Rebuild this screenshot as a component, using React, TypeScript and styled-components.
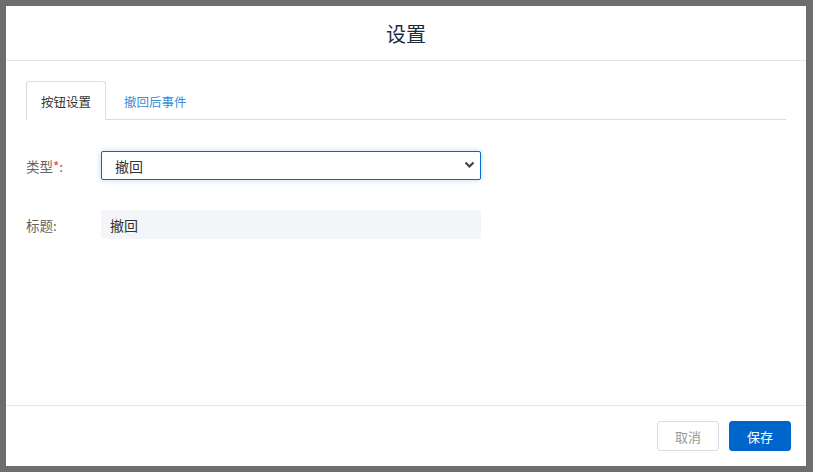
import React, { FC, useState } from 'react';
import styled, { createGlobalStyle } from 'styled-components';

const GlobalStyle = createGlobalStyle`
  html, body {
    margin: 0;
    padding: 0;
    background: #6d6d6d;
    font-family: "Noto Sans CJK SC", "Noto Sans", sans-serif;
  }
`;

const Backdrop = styled.div`
  width: 813px;
  height: 472px;
  box-sizing: border-box;
  padding: 6px;
  background: #6d6d6d;
`;

const Dialog = styled.div`
  width: 800px;
  height: 460px;
  background: #fff;
  display: flex;
  flex-direction: column;
`;

const Header = styled.div`
  height: 54px;
  flex: none;
  display: flex;
  align-items: center;
  justify-content: center;
  border-bottom: 1px solid #e4e4f0;

  > h2 {
    margin: 0;
    font-size: 20px;
    font-weight: 400;
    color: #1c2b3f;
  }
`;

const Body = styled.div`
  flex: 1;
  padding: 20px 20px 0;
`;

const TabBar = styled.div`
  display: flex;
  height: 38px;
  border-bottom: 1px solid #dcdde2;
`;

const Tab = styled.div<{ $active?: boolean }>`
  box-sizing: border-box;
  height: 39px;
  padding: 0 14px;
  display: flex;
  align-items: center;
  font-size: 12.5px;
  cursor: pointer;
  color: ${ p => p.$active ? '#333' : '#3a8bd8' };
  background: ${ p => p.$active ? '#fff' : 'transparent' };
  border: 1px solid ${ p => p.$active ? '#dcdde2' : 'transparent' };
  border-bottom: none;
  border-radius: 3px 3px 0 0;
  margin-right: 3px;
`;

const Form = styled.div`
  display: flex;
  flex-direction: column;
  gap: 30px;
  padding-top: 31px;
`;

const Row = styled.div`
  display: flex;
  align-items: center;
`;

const Label = styled.label`
  width: 75px;
  font-size: 13.5px;
  color: #666;

  > em {
    font-style: normal;
    color: #e33;
  }
`;

const SelectWrap = styled.div`
  position: relative;
  width: 380px;
  height: 29px;

  > svg {
    position: absolute;
    right: 6px;
    top: 10px;
    pointer-events: none;
  }
`;

const Select = styled.select`
  appearance: none;
  width: 100%;
  height: 100%;
  box-sizing: border-box;
  border: 1px solid #0a66c8;
  border-radius: 2px;
  box-shadow: 0 0 6px rgba(10, 102, 200, 0.25);
  padding: 0 13px;
  font-family: inherit;
  font-size: 14px;
  color: #333;
  background: #fff;
  outline: none;
`;

const Input = styled.input`
  width: 380px;
  height: 29px;
  box-sizing: border-box;
  border: none;
  border-radius: 2px;
  background: #f4f5f9;
  padding: 0 9px;
  font-family: inherit;
  font-size: 14px;
  color: #333;
  outline: none;
`;

const Footer = styled.div`
  flex: none;
  border-top: 1px solid #e6e6ea;
  padding: 15px 15px;
  display: flex;
  justify-content: flex-end;
  gap: 10px;
`;

const Button = styled.button<{ $primary?: boolean }>`
  width: 62px;
  height: 30px;
  box-sizing: border-box;
  border-radius: 3px;
  font-family: inherit;
  font-size: 13px;
  cursor: pointer;
  border: 1px solid ${ p => p.$primary ? '#0066cc' : '#d8dbe6' };
  background: ${ p => p.$primary ? '#0066cc' : '#fff' };
  color: ${ p => p.$primary ? '#fff' : '#999' };
`;

const App: FC = () => {
  const [tab, setTab] = useState(0);
  const [type, setType] = useState('revoke');

  return (
    <>
      <GlobalStyle />
      <Backdrop>
        <Dialog>
          <Header><h2>设置</h2></Header>
          <Body>
            <TabBar>
              <Tab $active={ tab === 0 } onClick={ () => setTab(0) }>按钮设置</Tab>
              <Tab $active={ tab === 1 } onClick={ () => setTab(1) }>撤回后事件</Tab>
            </TabBar>
            <Form>
              <Row>
                <Label>类型<em>*</em>:</Label>
                <SelectWrap>
                  <Select value={ type } onChange={ e => setType(e.target.value) }>
                    <option value="revoke">撤回</option>
                  </Select>
                  <svg width="11" height="8" viewBox="0 0 11 8">
                    <path d="M1.5 1.5 L5.5 5.5 L9.5 1.5" fill="none" stroke="#444" strokeWidth="2.2" />
                  </svg>
                </SelectWrap>
              </Row>
              <Row>
                <Label>标题:</Label>
                <Input defaultValue="撤回" />
              </Row>
            </Form>
          </Body>
          <Footer>
            <Button>取消</Button>
            <Button $primary>保存</Button>
          </Footer>
        </Dialog>
      </Backdrop>
    </>
  );
};

export default App;
